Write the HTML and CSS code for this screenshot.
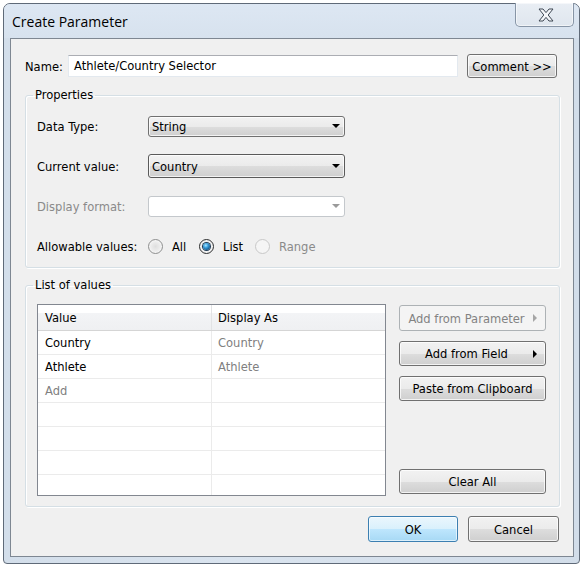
FILE: index.html
```html
<!DOCTYPE html>
<html>
<head>
<meta charset="utf-8">
<link rel="stylesheet" href="styles.css">
</head>
<body>
<div class="window">
  <div class="titlebar">
    <span class="title">Create Parameter</span>
    <div class="close">
      <svg width="16" height="14" viewBox="0 0 16 14"><path d="M1 1 H5 L8 4.6 L11 1 H15 L10.2 7 L15 13 H11 L8 9.4 L5 13 H1 L5.8 7 Z" fill="#f5f7fa" stroke="#3f4854" stroke-width="1" stroke-linejoin="round"/></svg>
    </div>
  </div>
  <div class="content">
    <div class="name-row">
      <span class="name-label">Name:</span>
      <div class="textbox">Athlete/Country Selector</div>
      <div class="btn comment">Comment &gt;&gt;</div>
    </div>

    <fieldset class="group props">
      <legend>Properties</legend>
      <div class="prop-row">
        <span class="plabel">Data Type:</span>
        <div class="combo"><span class="combo-text">String</span><span class="arrow"></span></div>
      </div>
      <div class="prop-row">
        <span class="plabel">Current value:</span>
        <div class="combo tall"><span class="combo-text">Country</span><span class="arrow"></span></div>
      </div>
      <div class="prop-row">
        <span class="plabel disabled">Display format:</span>
        <div class="combo off"><span class="combo-text"></span><span class="arrow"></span></div>
      </div>
      <div class="prop-row">
        <span class="plabel">Allowable values:</span>
        <div class="radios">
          <span class="opt o1"><span class="radio"></span>All</span>
          <span class="opt o2"><span class="radio on"></span>List</span>
          <span class="opt o3 disabled"><span class="radio dis"></span>Range</span>
        </div>
      </div>
    </fieldset>

    <fieldset class="group values">
      <legend>List of values</legend>
      <div class="values-body">
        <div class="grid">
          <div class="grow head"><div class="c1">Value</div><div class="c2">Display As</div></div>
          <div class="grow"><div class="c1">Country</div><div class="c2 muted">Country</div></div>
          <div class="grow"><div class="c1">Athlete</div><div class="c2 muted">Athlete</div></div>
          <div class="grow"><div class="c1 muted">Add</div><div class="c2"></div></div>
          <div class="grow"><div class="c1"></div><div class="c2"></div></div>
          <div class="grow"><div class="c1"></div><div class="c2"></div></div>
          <div class="grow"><div class="c1"></div><div class="c2"></div></div>
          <div class="grow"><div class="c1"></div><div class="c2"></div></div>
        </div>
        <div class="side">
          <div class="btn side-btn disabled-btn h26"><span class="bt">Add from Parameter</span><span class="tri tri-dis"></span></div>
          <div class="btn side-btn"><span class="bt">Add from Field</span><span class="tri"></span></div>
          <div class="btn side-btn center">Paste from Clipboard</div>
          <div class="btn side-btn center bottom">Clear All</div>
        </div>
      </div>
    </fieldset>

    <div class="footer">
      <div class="btn ok">OK</div>
      <div class="btn cancel">Cancel</div>
    </div>
  </div>
</div>
</body>
</html>
```

FILE: styles.css
```css
* { box-sizing: border-box; }

body {
  margin: 0;
  background: #ffffff;
  font-family: "DejaVu Sans Condensed", "DejaVu Sans", sans-serif;
  font-size: 12.8px;
  color: #000;
}

.window {
  margin: 3px 0 0 3px;
  width: 577px;
  height: 561px;
  border: 1px solid #5f6a78;
  border-radius: 7px 7px 4px 4px;
  background: linear-gradient(90deg, #d3deea 0%, #dae4ef 40%, #d2dde9 100%);
  padding: 0 5px 6px 6px;
  display: flex;
  flex-direction: column;
}

.titlebar {
  height: 34px;
  display: flex;
  justify-content: space-between;
  align-items: flex-start;
  margin: 0 -5px 0 -6px;
  padding: 0 5px 0 8px;
  border-radius: 6px 6px 0 0;
  background: linear-gradient(180deg, #dde7f3 0%, #d7e2ee 100%);
}

.title {
  font-family: "Open Sans", "Noto Sans", sans-serif;
  font-size: 14px;
  line-height: 19px;
  padding-top: 8px;
  color: #000;
}

.close {
  width: 59px;
  height: 24px;
  margin-top: -1px;
  border: 1px solid #8795a6;
  border-top: none;
  border-radius: 0 0 5px 5px;
  background: linear-gradient(180deg, #e9eef4 0%, #dfe6ee 100%);
  box-shadow: inset 0 0 0 1px rgba(255,255,255,0.55);
  display: flex;
  align-items: center;
  justify-content: center;
  padding-top: 1px;
  padding-left: 2px;
}

.content {
  flex: 1;
  border: 1px solid #7e8792;
  background: #f0f0f0;
  padding: 15px 13px 0 14px;
  display: flex;
  flex-direction: column;
}

/* Name row */
.name-row {
  height: 24px;
  display: flex;
  align-items: center;
}
.name-label { width: 43px; }
.textbox {
  width: 390px;
  height: 22px;
  background: #fff;
  border: 1px solid #e3e9ef;
  border-top-color: #abadb3;
  padding: 0 0 0 5px;
  line-height: 20px;
}

.btn {
  border: 1px solid #707070;
  border-radius: 3px;
  background: linear-gradient(180deg, #f2f2f2 0%, #ebebeb 50%, #dddddd 51%, #cfcfcf 100%);
  box-shadow: inset 0 0 0 1px rgba(255,255,255,0.75);
  display: flex;
  align-items: center;
  justify-content: center;
  color: #000;
}
.comment {
  width: 90px;
  height: 24px;
  margin-left: 9px;
}

/* Group boxes */
.group {
  margin: 0;
  padding: 0;
  border: 1px solid #d5dfe5;
  border-radius: 3px;
  box-shadow: inset 1px 1px 0 #fff, 1px 1px 0 #fff;
  min-width: 0;
}
.group legend {
  margin-left: -4px;
  padding: 0 2px;
  line-height: 16px;
  height: 16px;
}

.props {
  margin-top: 9px;
  padding: 3px 11px 1px 11px;
}
.prop-row {
  height: 40px;
  display: flex;
  align-items: center;
}
.plabel { width: 111px; }
.disabled { color: #8a8a8a; }

.combo {
  width: 197px;
  height: 21px;
  border: 1px solid #707070;
  border-radius: 3px;
  background: linear-gradient(180deg, #f2f2f2 0%, #ebebeb 50%, #dddddd 51%, #cfcfcf 100%);
  box-shadow: inset 0 0 0 1px rgba(255,255,255,0.75);
  display: flex;
  align-items: center;
  justify-content: space-between;
  padding: 0 4px 0 3px;
}
.combo.tall { height: 24px; border-color: #5a5a5a; }
.combo.off {
  background: #fff;
  border-color: #c4c8cc;
  box-shadow: none;
}
.arrow {
  width: 0;
  height: 0;
  border-left: 4px solid transparent;
  border-right: 4px solid transparent;
  border-top: 4px solid #000;
}
.combo.off .arrow { border-top-color: #9a9a9a; }

.radios { display: flex; align-items: center; }
.opt { display: flex; align-items: center; }
.o1 { width: 51px; }
.o2 { width: 56px; }
.radio {
  width: 15px;
  height: 15px;
  border-radius: 50%;
  border: 1px solid #8e8f8f;
  background: radial-gradient(circle at 50% 50%, #dedede 0%, #eeeeee 55%, #fafafa 100%);
  box-shadow: inset 0 0 0 1px #f4f4f4;
  margin-right: 9px;
  position: relative;
}
.radio.on {
  border-color: #2c2d2e;
  background: radial-gradient(circle at 50% 50%, #e8e8e8 0%, #f4f4f4 100%);
}
.radio.on::after {
  content: "";
  position: absolute;
  left: 3px;
  top: 3px;
  width: 7px;
  height: 7px;
  border-radius: 50%;
  background: radial-gradient(circle at 40% 35%, #aee6ff 0%, #3aa0dd 35%, #0d4d82 80%, #0a3b66 100%);
  box-shadow: 0 0 0 1px #1d3a55;
}
.radio.dis {
  border-color: #c8c8c8;
  background: #f5f5f5;
  box-shadow: none;
}

/* List of values */
.values {
  margin-top: 9px;
  padding: 11px 11px 10px 11px;
}
.values-body {
  display: flex;
  gap: 13px;
}
.grid {
  width: 349px;
  height: 192px;
  border: 1px solid #828790;
  background: #fff;
  overflow: hidden;
}
.grow {
  display: flex;
  height: 24px;
  border-bottom: 1px solid #ebebeb;
}
.grow.head {
  height: 26px;
  border-bottom: 1px solid #d5d5d5;
  background: linear-gradient(180deg, #ffffff 0%, #ffffff 30%, #f3f4f6 31%, #eff0f2 100%);
}
.c1 {
  width: 174px;
  border-right: 1px solid #ebebeb;
  padding-left: 7px;
  display: flex;
  align-items: center;
}
.head .c1 { border-right-color: #e2e3e5; }
.c2 {
  flex: 1;
  padding-left: 6px;
  display: flex;
  align-items: center;
}
.muted { color: #808080; }

.side {
  width: 147px;
  display: flex;
  flex-direction: column;
  gap: 10px;
  padding: 1px 0 2px 0;
}
.side-btn {
  height: 25px;
  justify-content: space-between;
  padding: 0 8px 0 0;
}
.side-btn.h26 { height: 26px; }
.side-btn .bt { flex: 1; text-align: center; }
.side-btn.center { justify-content: center; padding: 0; }
.side-btn.bottom { margin-top: auto; }
.disabled-btn {
  border-color: #adb2b5;
  background: #f4f4f4;
  box-shadow: none;
  color: #838383;
}
.tri {
  width: 0;
  height: 0;
  border-top: 4px solid transparent;
  border-bottom: 4px solid transparent;
  border-left: 4px solid #000;
}
.tri-dis { border-left-color: #a6a6a6; }

.footer {
  margin-top: 9px;
  display: flex;
  justify-content: flex-end;
  gap: 10px;
  padding-right: 1px;
}
.footer .btn { height: 26px; }
.ok {
  width: 90px;
  border-color: #3c7fb1;
  background: linear-gradient(180deg, #eaf6fd 0%, #d9f0fc 50%, #bee6fd 51%, #a7d9f5 100%);
  box-shadow: inset 0 0 0 1px rgba(255,255,255,0.6);
}
.cancel { width: 91px; }
```
